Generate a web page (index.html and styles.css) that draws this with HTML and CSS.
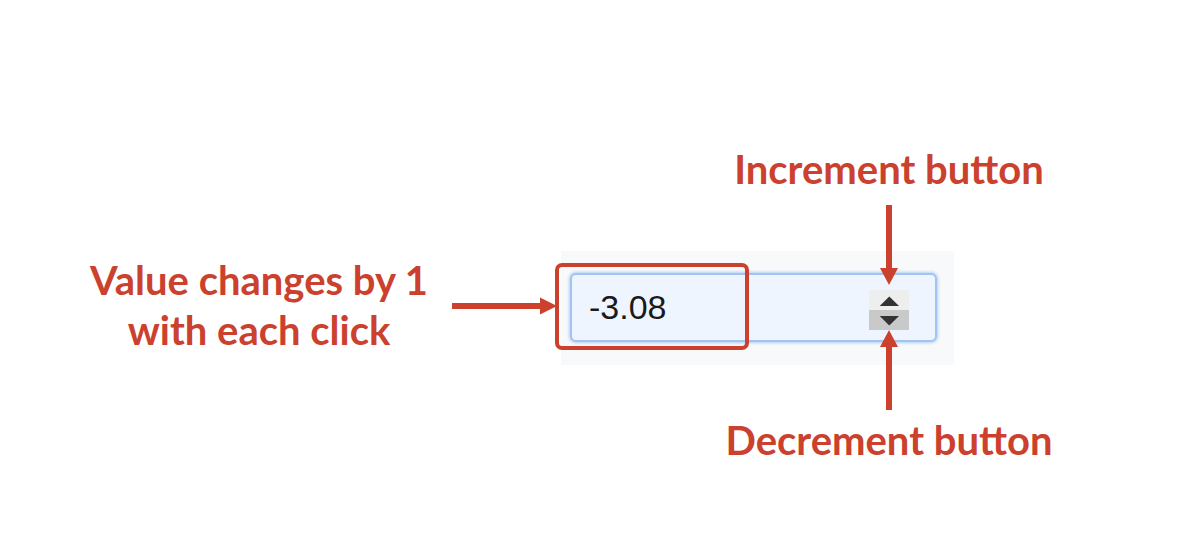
FILE: index.html
```html
<!DOCTYPE html>
<html lang="en">
<head>
<meta charset="utf-8">
<title>Number input spinner</title>
<link rel="stylesheet" href="styles.css">
</head>
<body>
<div class="stage">
  <div class="left-label">Value changes by 1<br>with each click</div>
  <svg class="arrow-right" width="105" height="18" viewBox="0 0 105 18" aria-hidden="true">
    <rect x="0" y="6" width="90" height="6" fill="#cb412d"/>
    <polygon points="88,0.5 105,9 88,17.5" fill="#cb412d"/>
  </svg>
  <div class="panel">
    <div class="input">
      <span class="value">-3.08</span>
      <div class="spinner">
        <div class="spin spin-up">
          <svg width="40" height="20" viewBox="0 0 40 20"><polygon points="20.3,6.5 30,16 10.7,16" fill="#333"/></svg>
        </div>
        <div class="spin spin-down">
          <svg width="40" height="20" viewBox="0 0 40 20"><polygon points="10.7,6 30,6 20.3,15.5" fill="#333"/></svg>
        </div>
      </div>
    </div>
    <div class="highlight"></div>
  </div>
  <div class="callout callout-top">
    <div class="callout-label">Increment button</div>
    <svg class="arrow-v" width="18" height="80" viewBox="0 0 18 80" aria-hidden="true">
      <rect x="6" y="0" width="6" height="64" fill="#cb412d"/>
      <polygon points="0,63 18,63 9,80" fill="#cb412d"/>
    </svg>
  </div>
  <div class="callout callout-bottom">
    <svg class="arrow-v" width="18" height="80" viewBox="0 0 18 80" aria-hidden="true">
      <polygon points="9,0 0,17 18,17" fill="#cb412d"/>
      <rect x="6" y="16" width="6" height="64" fill="#cb412d"/>
    </svg>
    <div class="callout-label">Decrement button</div>
  </div>
</div>
</body>
</html>
```

FILE: styles.css
```css
html, body {
  margin: 0;
  padding: 0;
  background: #ffffff;
}
.stage {
  position: relative;
  width: 1180px;
  height: 550px;
  box-sizing: border-box;
  padding-top: 251px;
  display: flex;
  align-items: flex-start;
  overflow: hidden;
}
.left-label {
  width: 360px;
  margin-left: 79px;
  margin-top: 3.5px;
  text-align: center;
  font-family: Lato, "Open Sans", sans-serif;
  font-weight: 700;
  font-size: 40px;
  line-height: 50px;
  color: #cb412d;
  white-space: nowrap;
}
.arrow-right {
  display: block;
  margin-left: 13px;
  margin-top: 46px;
  flex: none;
}
.panel {
  position: relative;
  margin-left: 4px;
  width: 393px;
  height: 114px;
  box-sizing: border-box;
  padding: 22px 17px 23px 9px;
  background: #f8f9fa;
}
.input {
  height: 69px;
  box-sizing: border-box;
  border: 2px solid #a3c4f0;
  border-radius: 6px;
  box-shadow: 0 0 3px 1px #b4cff4;
  background: #eef5ff;
  display: flex;
  align-items: center;
  padding-left: 17px;
  padding-right: 26px;
}
.value {
  font-family: "Liberation Sans", Arial, sans-serif;
  font-size: 34px;
  color: #1a1a1a;
}
.spinner {
  margin-left: auto;
  margin-top: 4px;
  display: flex;
  flex-direction: column;
  width: 40px;
}
.spin {
  height: 20px;
}
.spin svg {
  display: block;
}
.spin-up {
  background: #eeeeee;
}
.spin-down {
  background: #c9c9c9;
}
.highlight {
  position: absolute;
  left: -6px;
  top: 12px;
  width: 194px;
  height: 87px;
  box-sizing: border-box;
  border: 4px solid #cb412d;
  border-radius: 7px;
}
.callout {
  position: absolute;
  left: 689px;
  width: 400px;
  display: flex;
  flex-direction: column;
  align-items: center;
}
.callout-top {
  top: 146.5px;
}
.callout-bottom {
  top: 330px;
}
.callout-label {
  font-family: Lato, "Open Sans", sans-serif;
  font-weight: 700;
  font-size: 40px;
  line-height: 44px;
  color: #cb412d;
  white-space: nowrap;
}
.callout-top .arrow-v {
  margin-top: 14.5px;
}
.callout-bottom .arrow-v {
  margin-bottom: 7.5px;
}
.arrow-v {
  display: block;
}
```
